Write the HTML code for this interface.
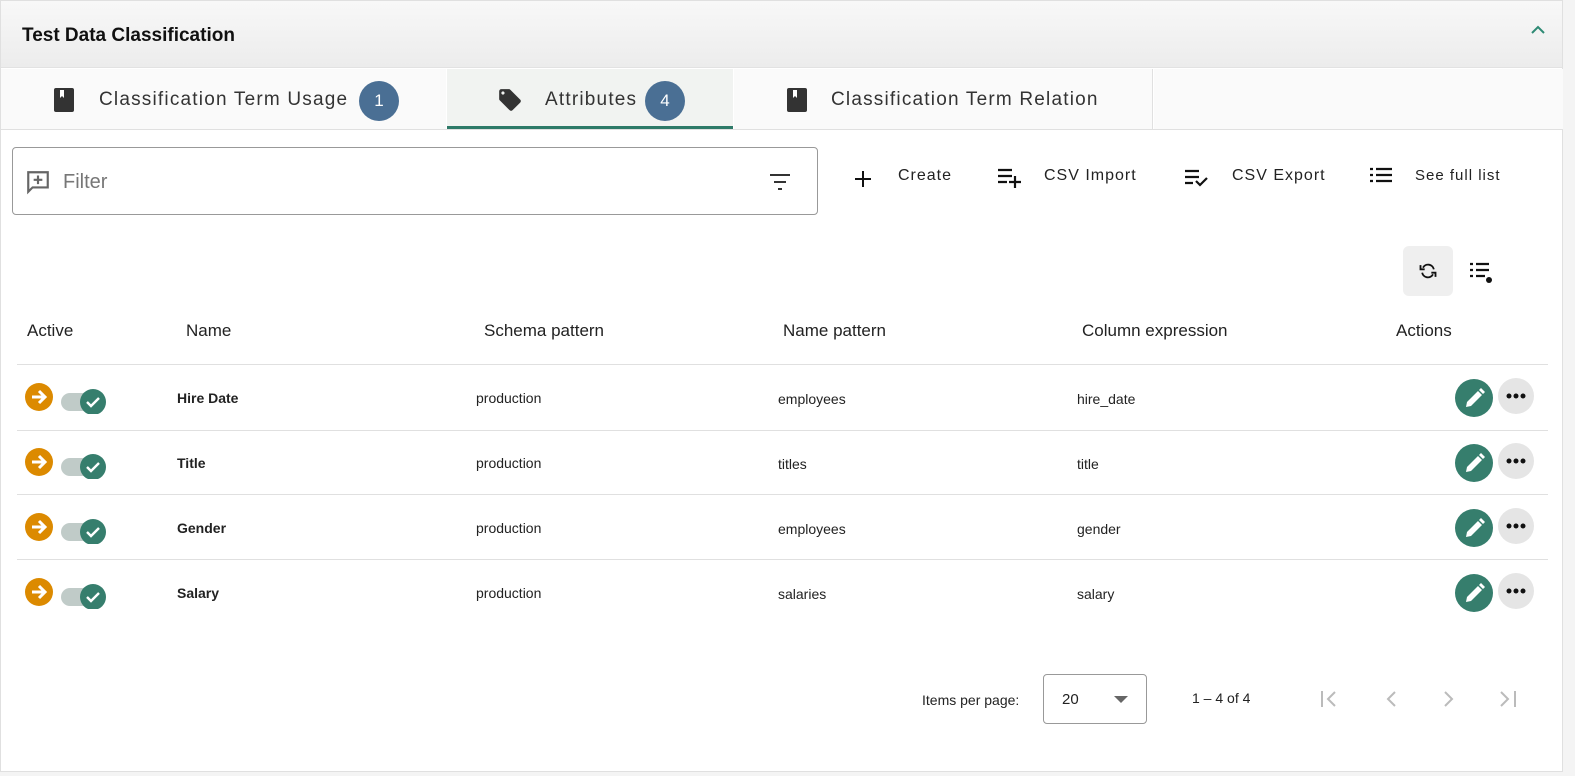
<!DOCTYPE html>
<html><head><style>
*{box-sizing:border-box;margin:0;padding:0}
body{width:1575px;height:776px;background:#f4f4f4;font-family:"Liberation Sans",sans-serif;position:relative;overflow:hidden;color:#222}
.card{position:absolute;left:0;top:0;width:1563px;height:772px;background:#fff;border:1px solid #e0e0e0}
.hdr{position:absolute;left:0;top:0;width:100%;height:67px;background:linear-gradient(#f8f8f8,#ececec);border-bottom:1px solid #e2e2e2}
.hdr b{position:absolute;left:21px;top:24px;font-size:19px;color:#111}
.abs{position:absolute}
.tab{position:absolute;top:68px;height:60px;font-size:19px;color:#333;letter-spacing:1.2px}
.badge{display:inline-block;width:40px;height:40px;border-radius:50%;background:#4a6f94;color:#fff;text-align:center;line-height:40px;font-size:17px;letter-spacing:0}
.th{position:absolute;top:320px;font-size:17px;color:#222}
.line{position:absolute;left:16px;width:1531px;height:1px;background:#e0e0e0}
.cell{position:absolute;font-size:14px;color:#222}
.btn{position:absolute;top:166px;font-size:16px;letter-spacing:1px;color:#222}
.rw{position:absolute;left:0;width:1563px;height:40px}
</style></head><body>
<div class="card">
<div class="hdr"><b>Test Data Classification</b>
<svg class="abs" style="left:1528px;top:22px" width="18" height="14" viewBox="0 0 18 14"><path d="M3 10 L9 4 L15 10" fill="none" stroke="#2e8a74" stroke-width="2"/></svg></div>
<div class="abs" style="left:0;top:128px;width:100%;height:1px;background:#e0e0e0"></div>
<div class="tab" style="left:0;width:445px;background:#fafafa">
<svg class="abs" style="left:52px;top:18px" width="22" height="26" viewBox="0 0 22 26"><rect x="1" y="1" width="20" height="24" rx="2" fill="#333"/><path d="M7 3v8l2-2 2 2V3z" fill="#fff"/></svg>
<span class="abs" style="left:98px;top:20px">Classification Term Usage</span><span class="badge abs" style="left:358px;top:12px">1</span></div>
<div class="tab" style="left:446px;width:286px;background:#f1f3f1;border-bottom:3px solid #2e7a68">
<svg class="abs" style="left:50px;top:18px" width="26" height="26" viewBox="0 0 24 24"><path d="M21.4 11.6l-9-9C12 2.2 11.5 2 11 2H4c-1.1 0-2 .9-2 2v7c0 .6.2 1.1.6 1.4l9 9c.4.4.9.6 1.4.6s1-.2 1.4-.6l7-7c.4-.4.6-.9.6-1.4s-.2-1.1-.6-1.4zM5.5 7C4.7 7 4 6.3 4 5.5S4.7 4 5.5 4 7 4.7 7 5.5 6.3 7 5.5 7z" fill="#333"/></svg>
<span class="abs" style="left:98px;top:20px">Attributes</span><span class="badge abs" style="left:198px;top:12px">4</span></div>
<div class="tab" style="left:733px;width:419px;border-right:1px solid #e0e0e0;background:#fafafa">
<svg class="abs" style="left:52px;top:18px" width="22" height="26" viewBox="0 0 22 26"><rect x="1" y="1" width="20" height="24" rx="2" fill="#333"/><path d="M7 3v8l2-2 2 2V3z" fill="#fff"/></svg>
<span class="abs" style="left:97px;top:20px">Classification Term Relation</span></div>
<div class="tab" style="left:1153px;width:409px;background:#fafafa"></div>

<div class="abs" style="left:11px;top:146px;width:806px;height:68px;border:1px solid #999;border-radius:4px">
<svg class="abs" style="left:12px;top:21px" width="26" height="26" viewBox="0 0 24 24"><path d="M3 3h18v14H7l-4 4z" fill="none" stroke="#666" stroke-width="2"/><path d="M12 6v8M8 10h8" stroke="#666" stroke-width="2"/></svg>
<span class="abs" style="left:50px;top:23px;font-size:20px;color:#777">Filter</span>
<svg class="abs" style="left:756px;top:25px" width="22" height="18" viewBox="0 0 22 18"><path d="M1 2h20M5 9h12M9 16h4" stroke="#333" stroke-width="2"/></svg></div>

<svg class="abs" style="left:852px;top:168px" width="20" height="20" viewBox="0 0 20 20"><path d="M10 2v16M2 10h16" stroke="#111" stroke-width="2"/></svg>
<span class="btn" style="left:897px">Create</span>
<svg class="abs" style="left:996px;top:166px" width="26" height="22" viewBox="0 0 26 22"><path d="M1 3h14M1 9h14M1 15h9M18 9v12M12 15h12" stroke="#111" stroke-width="2.2"/></svg>
<span class="btn" style="left:1043px">CSV Import</span>
<svg class="abs" style="left:1183px;top:166px" width="26" height="22" viewBox="0 0 26 22"><path d="M1 4h14M1 10h14M1 16h8M12 14l4 4 7-7" stroke="#111" stroke-width="2.2" fill="none"/></svg>
<span class="btn" style="left:1231px">CSV Export</span>
<svg class="abs" style="left:1368px;top:166px" width="24" height="18" viewBox="0 0 24 18"><path d="M1 2h3M1 8h3M1 14h3M7 2h16M7 8h16M7 14h16" stroke="#111" stroke-width="2.2"/></svg>
<span class="btn" style="left:1414px;font-size:15px">See full list</span>

<div class="abs" style="left:1402px;top:245px;width:50px;height:50px;border-radius:6px;background:#efefef"></div>
<svg class="abs" style="left:1416px;top:260px" width="22" height="20" viewBox="0 0 24 24"><path d="M19 10a7 7 0 0 0-13-2M5 14a7 7 0 0 0 13 2" fill="none" stroke="#111" stroke-width="2.2"/><path d="M3 5v5h5M21 19v-5h-5" fill="none" stroke="#111" stroke-width="2.2"/></svg>
<svg class="abs" style="left:1468px;top:260px" width="26" height="24" viewBox="0 0 26 24"><path d="M1 3h3M1 9h3M1 15h3M7 3h13M7 9h13M7 15h9" stroke="#111" stroke-width="2.2"/><circle cx="20" cy="19" r="3" fill="#111"/></svg>

<div class="th" style="left:26px">Active</div>
<div class="th" style="left:185px">Name</div>
<div class="th" style="left:483px">Schema pattern</div>
<div class="th" style="left:782px">Name pattern</div>
<div class="th" style="left:1081px">Column expression</div>
<div class="th" style="left:1395px">Actions</div>
<div class="line" style="top:363px"></div>
<div class="line" style="top:429px"></div>
<div class="line" style="top:493px"></div>
<div class="line" style="top:558px"></div>

<span class="abs" style="left:921px;top:691px;font-size:14px">Items per page:</span>
<div class="abs" style="left:1042px;top:673px;width:104px;height:50px;border:1px solid #999;border-radius:4px">
<span class="abs" style="left:18px;top:16px;font-size:15px">20</span>
<svg class="abs" style="left:70px;top:21px" width="14" height="8"><path d="M0 0h14L7 7z" fill="#666"/></svg></div>
<span class="abs" style="left:1191px;top:689px;font-size:14px">1 – 4 of 4</span>
<svg class="abs" style="left:1318px;top:688px" width="210" height="20" viewBox="0 0 210 20"><g fill="none" stroke="#bbb" stroke-width="2"><path d="M3 2v16M16 3l-7 7 7 7"/><path d="M76 3l-7 7 7 7"/><path d="M126 3l7 7-7 7"/><path d="M182 3l7 7-7 7M196 2v16"/></g></svg>
</div>

<div class="rw" style="top:378px">
<svg class="abs" style="left:24px;top:4px" width="84" height="32" viewBox="0 0 84 32"><circle cx="15" cy="15" r="14" fill="#dc8a00"/><path d="M8 15h13M15 9l6 6-6 6" stroke="#fff" stroke-width="3" fill="none"/><rect x="37" y="11" width="40" height="18" rx="9" fill="#c0cbc8"/><circle cx="69" cy="20" r="13" fill="#367e6d"/><path d="M63 20l4 4 8-8" stroke="#fff" stroke-width="2.4" fill="none"/></svg>
<b class="cell" style="left:177px;top:12px">Hire Date</b>
<span class="cell" style="left:476px;top:12px">production</span>
<span class="cell" style="left:778px;top:13px">employees</span>
<span class="cell" style="left:1077px;top:13px">hire_date</span>
<svg class="abs" style="left:1455px;top:0" width="82" height="40" viewBox="0 0 82 40"><circle cx="19" cy="20" r="19" fill="#367e6d"/><path d="M11 29l1-5 11-11 4 4-11 11zM24 12l2-2 4 4-2 2z" fill="#fff"/><circle cx="61" cy="18" r="18" fill="#e5e5e5"/><circle cx="54" cy="18" r="2.5" fill="#111"/><circle cx="61" cy="18" r="2.5" fill="#111"/><circle cx="68" cy="18" r="2.5" fill="#111"/></svg>
</div>
<div class="rw" style="top:443px">
<svg class="abs" style="left:24px;top:4px" width="84" height="32" viewBox="0 0 84 32"><circle cx="15" cy="15" r="14" fill="#dc8a00"/><path d="M8 15h13M15 9l6 6-6 6" stroke="#fff" stroke-width="3" fill="none"/><rect x="37" y="11" width="40" height="18" rx="9" fill="#c0cbc8"/><circle cx="69" cy="20" r="13" fill="#367e6d"/><path d="M63 20l4 4 8-8" stroke="#fff" stroke-width="2.4" fill="none"/></svg>
<b class="cell" style="left:177px;top:12px">Title</b>
<span class="cell" style="left:476px;top:12px">production</span>
<span class="cell" style="left:778px;top:13px">titles</span>
<span class="cell" style="left:1077px;top:13px">title</span>
<svg class="abs" style="left:1455px;top:0" width="82" height="40" viewBox="0 0 82 40"><circle cx="19" cy="20" r="19" fill="#367e6d"/><path d="M11 29l1-5 11-11 4 4-11 11zM24 12l2-2 4 4-2 2z" fill="#fff"/><circle cx="61" cy="18" r="18" fill="#e5e5e5"/><circle cx="54" cy="18" r="2.5" fill="#111"/><circle cx="61" cy="18" r="2.5" fill="#111"/><circle cx="68" cy="18" r="2.5" fill="#111"/></svg>
</div>
<div class="rw" style="top:508px">
<svg class="abs" style="left:24px;top:4px" width="84" height="32" viewBox="0 0 84 32"><circle cx="15" cy="15" r="14" fill="#dc8a00"/><path d="M8 15h13M15 9l6 6-6 6" stroke="#fff" stroke-width="3" fill="none"/><rect x="37" y="11" width="40" height="18" rx="9" fill="#c0cbc8"/><circle cx="69" cy="20" r="13" fill="#367e6d"/><path d="M63 20l4 4 8-8" stroke="#fff" stroke-width="2.4" fill="none"/></svg>
<b class="cell" style="left:177px;top:12px">Gender</b>
<span class="cell" style="left:476px;top:12px">production</span>
<span class="cell" style="left:778px;top:13px">employees</span>
<span class="cell" style="left:1077px;top:13px">gender</span>
<svg class="abs" style="left:1455px;top:0" width="82" height="40" viewBox="0 0 82 40"><circle cx="19" cy="20" r="19" fill="#367e6d"/><path d="M11 29l1-5 11-11 4 4-11 11zM24 12l2-2 4 4-2 2z" fill="#fff"/><circle cx="61" cy="18" r="18" fill="#e5e5e5"/><circle cx="54" cy="18" r="2.5" fill="#111"/><circle cx="61" cy="18" r="2.5" fill="#111"/><circle cx="68" cy="18" r="2.5" fill="#111"/></svg>
</div>
<div class="rw" style="top:573px">
<svg class="abs" style="left:24px;top:4px" width="84" height="32" viewBox="0 0 84 32"><circle cx="15" cy="15" r="14" fill="#dc8a00"/><path d="M8 15h13M15 9l6 6-6 6" stroke="#fff" stroke-width="3" fill="none"/><rect x="37" y="11" width="40" height="18" rx="9" fill="#c0cbc8"/><circle cx="69" cy="20" r="13" fill="#367e6d"/><path d="M63 20l4 4 8-8" stroke="#fff" stroke-width="2.4" fill="none"/></svg>
<b class="cell" style="left:177px;top:12px">Salary</b>
<span class="cell" style="left:476px;top:12px">production</span>
<span class="cell" style="left:778px;top:13px">salaries</span>
<span class="cell" style="left:1077px;top:13px">salary</span>
<svg class="abs" style="left:1455px;top:0" width="82" height="40" viewBox="0 0 82 40"><circle cx="19" cy="20" r="19" fill="#367e6d"/><path d="M11 29l1-5 11-11 4 4-11 11zM24 12l2-2 4 4-2 2z" fill="#fff"/><circle cx="61" cy="18" r="18" fill="#e5e5e5"/><circle cx="54" cy="18" r="2.5" fill="#111"/><circle cx="61" cy="18" r="2.5" fill="#111"/><circle cx="68" cy="18" r="2.5" fill="#111"/></svg>
</div>
</body></html>
